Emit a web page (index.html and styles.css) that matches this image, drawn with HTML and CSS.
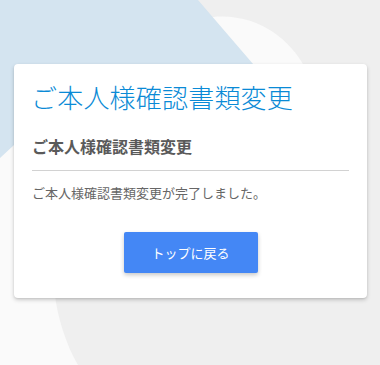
FILE: index.html
```html
<!DOCTYPE html>
<html lang="ja">
<head>
<meta charset="utf-8">
<title>ご本人様確認書類変更</title>
<link rel="stylesheet" href="styles.css">
</head>
<body>
<svg class="backdrop" width="380" height="365" viewBox="0 0 380 365" aria-hidden="true">
  <rect x="0" y="0" width="380" height="365" fill="#efefef"/>
  <path d="M190 17 L213 17 C258 13 290 40 304 66 L300 200 L55 295 C57 315 66 345 78 365 L0 365 L0 100 Z" fill="#fafafa"/>
  <path d="M0 0 L198 0 L290 107 L14 145 L0 158 Z" fill="#d4e4f0"/>
</svg>
<main class="page">
  <section class="card">
    <h1 class="card-title">ご本人様確認書類変更</h1>
    <h2 class="card-subtitle">ご本人様確認書類変更</h2>
    <hr class="divider">
    <p class="message">ご本人様確認書類変更が完了しました。</p>
    <div class="actions">
      <button class="btn-primary" type="button">トップに戻る</button>
    </div>
  </section>
</main>
</body>
</html>
```

FILE: styles.css
```css
html, body {
  margin: 0;
  padding: 0;
  background: #efefef;
}

body {
  width: 380px;
  height: 365px;
  overflow: hidden;
  position: relative;
  font-family: "Noto Sans CJK JP", "Noto Sans", sans-serif;
}

.backdrop {
  position: absolute;
  left: 0;
  top: 0;
  z-index: 0;
}

.page {
  position: relative;
  z-index: 1;
  padding: 64px 13px 0 14px;
}

.card {
  background: #ffffff;
  border-radius: 4px;
  box-shadow: 0 2px 4px rgba(0, 0, 0, 0.18), 0 1px 2px rgba(0, 0, 0, 0.08);
  padding: 15px 18px 24px 18px;
  height: 234px;
  box-sizing: border-box;
}

.card-title {
  margin: 0 0 0 -1px;
  font-size: 26px;
  line-height: 36px;
  font-weight: 300;
  color: #0a8ad6;
  letter-spacing: 0.2px;
}

.card-subtitle {
  margin: 19px 0 0 0;
  font-size: 16px;
  line-height: 24px;
  font-weight: 700;
  color: #5a5a5a;
}

.divider {
  margin: 12px 0 0 0;
  border: 0;
  border-top: 1px solid #d2d2d2;
  height: 0;
}

.message {
  margin: 13px 0 0 0;
  font-size: 13px;
  line-height: 18px;
  color: #666666;
}

.actions {
  display: flex;
  justify-content: center;
  margin-top: 30px;
}

.btn-primary {
  width: 134px;
  height: 41px;
  border: 0;
  border-radius: 2px;
  background: #4487f5;
  color: #ffffff;
  font-family: "Noto Sans CJK JP", "Noto Sans", sans-serif;
  font-size: 13px;
  box-shadow: 0 2px 4px rgba(0, 0, 0, 0.22);
  cursor: pointer;
}
```
